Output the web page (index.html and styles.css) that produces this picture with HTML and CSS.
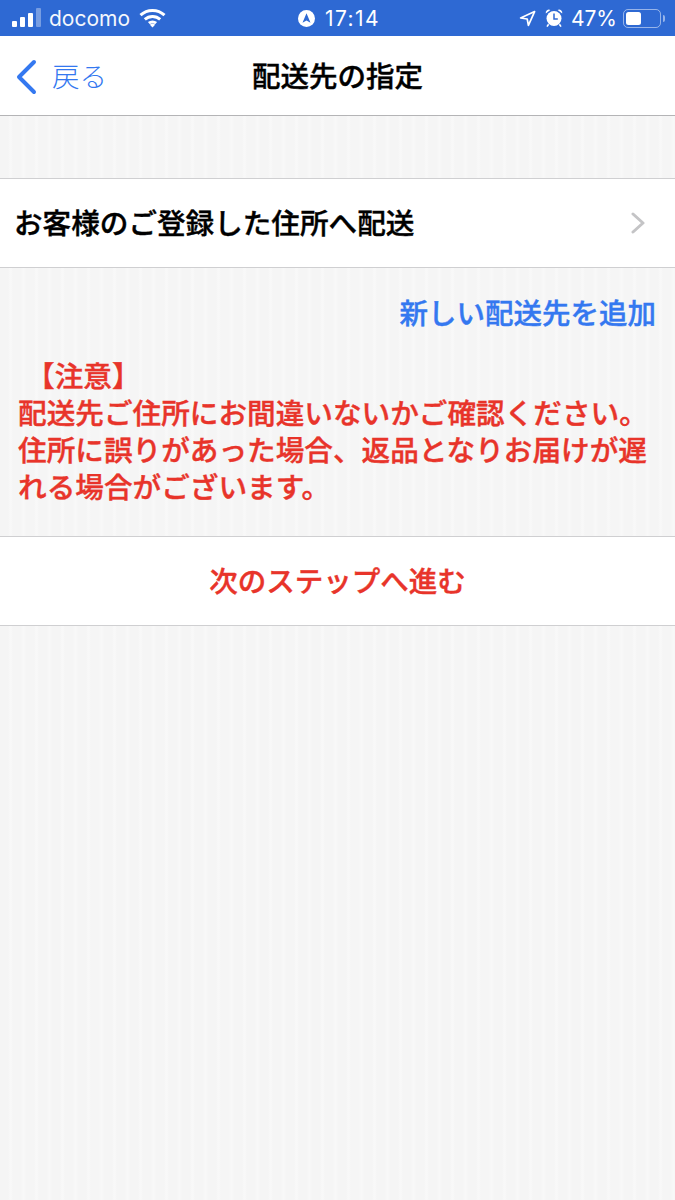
FILE: index.html
```html
<!DOCTYPE html>
<html lang="ja">
<head>
  <meta charset="UTF-8">
  <title>配送先の指定</title>
  <link rel="stylesheet" href="styles.css">
</head>
<body>
  <div class="status-bar">
    <div class="status-left">
      <svg class="signal" width="29" height="20" viewBox="0 0 29 20">
        <rect x="0" y="13" width="5" height="6" rx="1" fill="#fff"/>
        <rect x="8" y="9" width="5" height="10" rx="1" fill="#fff"/>
        <rect x="16" y="5" width="5" height="14" rx="1" fill="#fff"/>
        <rect x="24" y="0" width="5" height="19" rx="1" fill="#fff" opacity="0.35"/>
      </svg>
      <span class="carrier">docomo</span>
      <svg class="wifi" width="27" height="20" viewBox="0 0 27 20">
        <path d="M1.5 7.2a17.5 17.5 0 0 1 24 0M5.8 11.4a11.5 11.5 0 0 1 15.4 0M9.9 15.2a5.6 5.6 0 0 1 7.2 0" fill="none" stroke="#fff" stroke-width="3"/>
        <path d="M13.5 19.5l-2.6-2.8a3.8 3.8 0 0 1 5.2 0z" fill="#fff"/>
      </svg>
    </div>
    <div class="status-center">
      <svg width="17" height="17" viewBox="0 0 17 17">
        <circle cx="8.5" cy="8.5" r="8.5" fill="#fff"/>
        <path d="M8.5 3.2l4 9.6-4-2.2-4 2.2z" fill="#2e69d3"/>
      </svg>
      <span class="clock">17:14</span>
    </div>
    <div class="status-right">
      <svg class="arrow" width="17" height="17" viewBox="0 0 17 17">
        <path d="M15.6 1.6L1.6 8l6.6 1 1.2 6.4z" fill="none" stroke="#fff" stroke-width="1.7" stroke-linejoin="round"/>
      </svg>
      <svg class="alarm" width="18" height="20" viewBox="0 0 18 20">
        <circle cx="9" cy="10.5" r="7.5" fill="#fff"/>
        <path d="M9 5.5v5.5h3.8" fill="none" stroke="#2e69d3" stroke-width="1.5"/>
        <path d="M0.8 5.5a3.2 3.2 0 0 1 4.6-3.6zM17.2 5.5a3.2 3.2 0 0 0-4.6-3.6z" fill="#fff"/>
        <path d="M3.6 16.2l-1.6 2.4M14.4 16.2l1.6 2.4" stroke="#fff" stroke-width="1.6"/>
      </svg>
      <span class="percent">47%</span>
      <div class="battery"><div class="battery-level"></div></div>
      <div class="battery-tip"></div>
    </div>
  </div>

  <div class="nav-bar">
    <div class="back">
      <svg width="22" height="36" viewBox="0 0 22 36">
        <path d="M19 3L4 18l15 15" fill="none" stroke="#3478f0" stroke-width="4" stroke-linecap="round" stroke-linejoin="round"/>
      </svg>
      <span class="back-label">戻る</span>
    </div>
    <div class="nav-title heavy">配送先の指定</div>
  </div>

  <div class="spacer"></div>

  <div class="row">
    <span class="row-label heavy">お客様のご登録した住所へ配送</span>
    <svg width="14" height="22" viewBox="0 0 14 22">
      <path d="M2 2l10 9-10 9" fill="none" stroke="#c4c4c6" stroke-width="3" stroke-linecap="round" stroke-linejoin="round"/>
    </svg>
  </div>

  <div class="add-link heavy">新しい配送先を追加</div>

  <div class="notice heavy">
    <div class="notice-head">【注意】</div>
    配送先ご住所にお間違いないかご確認ください。<br>
    住所に誤りがあった場合、返品となりお届けが遅れる場合がございます。
  </div>

  <div class="next-button heavy">次のステップへ進む</div>
</body>
</html>
```

FILE: styles.css
```css
html, body {
  margin: 0;
  padding: 0;
  height: 100%;
  overflow: hidden;
}

body {
  font-family: "Noto Sans CJK JP", "Noto Sans", sans-serif;
  background-color: #f5f5f5;
  background-image: repeating-linear-gradient(90deg, #f5f5f5 0, #f5f5f5 8px, #f8f8f8 10px, #f8f8f8 11px, #f5f5f5 13px);
}

/* between medium and bold, like the semibold of the original font */
.heavy {
  font-weight: 500;
  -webkit-text-stroke: 0.4px currentColor;
}

.status-bar {
  height: 36px;
  background-color: #2e69d3;
  color: #fff;
  display: flex;
  align-items: center;
  justify-content: space-between;
  position: relative;
  padding: 0 10px 0 12px;
  font-family: "Inter", "Liberation Sans", sans-serif;
  font-size: 21px;
}

.status-left, .status-right, .status-center {
  display: flex;
  align-items: center;
}

.carrier {
  margin-left: 8px;
  opacity: 0.95;
}

.wifi {
  margin-left: 9px;
}

.status-center {
  position: absolute;
  left: 298px;
  top: 0;
  bottom: 0;
  gap: 10px;
}

.clock {
  letter-spacing: 1.4px;
}

.arrow {
  margin-right: 9px;
}

.alarm {
  margin-right: 8px;
}

.percent {
  margin-right: 6px;
}

.battery {
  width: 32px;
  height: 13px;
  border: 1.5px solid rgba(255, 255, 255, 0.5);
  border-radius: 5px;
  padding: 2px;
  box-sizing: content-box;
}

.battery-level {
  width: 47%;
  height: 100%;
  background-color: #fff;
  border-radius: 2.5px;
}

.battery-tip {
  width: 2px;
  height: 7px;
  margin-left: 2px;
  background-color: rgba(255, 255, 255, 0.5);
  border-radius: 0 2px 2px 0;
}

.nav-bar {
  height: 79px;
  background-color: white;
  border-bottom: 1px solid #b4b4b6;
  display: flex;
  align-items: center;
  justify-content: center;
  position: relative;
}

.back {
  position: absolute;
  left: 15px;
  top: 21px;
  display: flex;
  align-items: center;
  gap: 15px;
  color: #3478f0;
  font-size: 27.5px;
  font-weight: 300;
  line-height: 36px;
}

.back-label {
  padding-bottom: 3px;
}

.nav-title {
  font-size: 28.5px;
  color: black;
  padding-bottom: 2px;
}

.spacer {
  height: 62px;
}

.row {
  height: 88px;
  background-color: white;
  border-top: 1px solid #cfcfd1;
  border-bottom: 1px solid #cfcfd1;
  display: flex;
  align-items: center;
  justify-content: space-between;
  padding: 0 30px 0 14px;
  font-size: 28.6px;
  color: black;
}

.row-label {
  padding-bottom: 4px;
}

.add-link {
  text-align: right;
  padding: 22px 19px 0 0;
  font-size: 28.5px;
  line-height: 44px;
  color: #3478f0;
}

.notice {
  margin-top: 22px;
  padding: 0 22px 0 18px;
  font-size: 28.64px;
  line-height: 37px;
  color: #e8342a;
}

.notice-head {
  padding-left: 8px;
}

.next-button {
  margin-top: 32px;
  height: 88px;
  line-height: 86px;
  text-align: center;
  background-color: white;
  border-top: 1px solid #cfcfd1;
  border-bottom: 1px solid #cfcfd1;
  font-size: 28.5px;
  color: #e8342a;
}
```
